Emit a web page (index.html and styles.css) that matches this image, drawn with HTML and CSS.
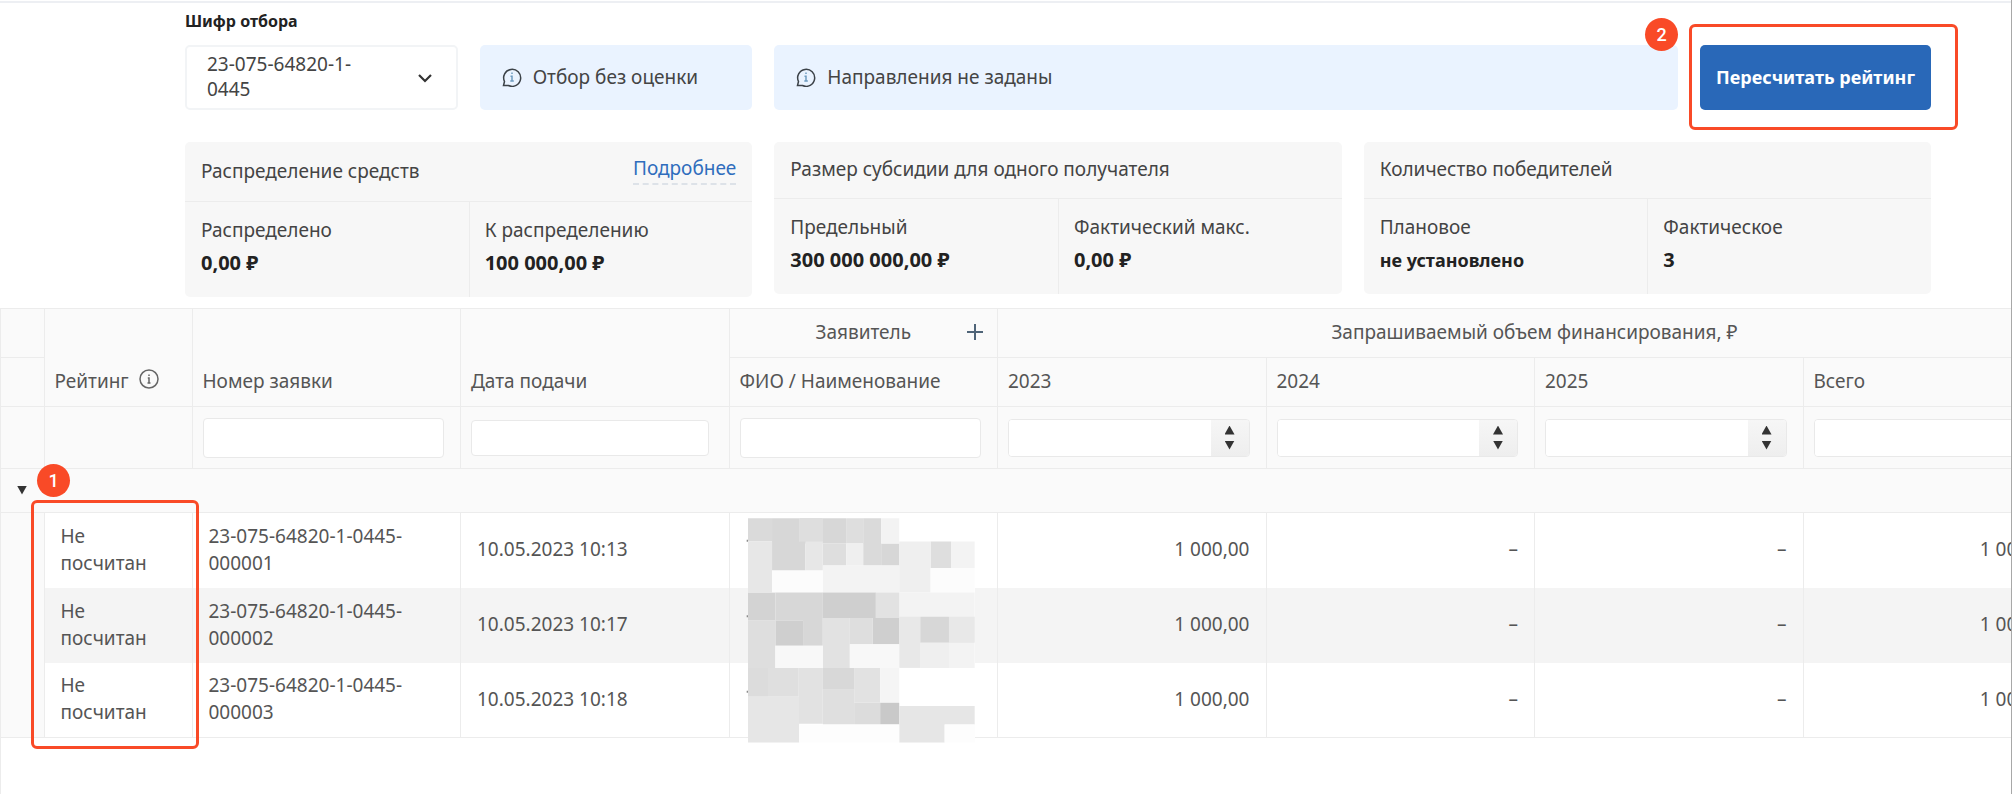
FILE: index.html
```html
<!DOCTYPE html>
<html lang="ru">
<head>
<meta charset="utf-8">
<title>Рейтинг заявок</title>
<link rel="stylesheet" href="styles.css">
</head>
<body>
<main class="page">
  <section class="summary">
    <label class="field-label" for="selection">Шифр отбора</label>
    <div class="toolbar">
      <div class="toolbar-start">
        <div class="select-box">
          <select id="selection" class="select"><option>23-075-64820-1-0445</option></select>
          <svg class="chevron" viewBox="0 0 16 10" aria-hidden="true"><path d="M2 2l6 6 6-6"/></svg>
        </div>
        <div class="notice">
          <svg class="notice-icon" viewBox="0 0 20 20" aria-hidden="true"><path d="M1.500 18.500l1-4A8.500 8.500 0 1 1 6.500 18.500z"/><path class="accent" d="M10 5.500v1.600M8.500 9.300H10v4.700M8.300 14h3.500"/></svg>
          <span>Отбор без оценки</span>
        </div>
      </div>
      <div class="notice">
        <svg class="notice-icon" viewBox="0 0 20 20" aria-hidden="true"><path d="M1.500 18.500l1-4A8.500 8.500 0 1 1 6.500 18.500z"/><path class="accent" d="M10 5.500v1.600M8.500 9.300H10v4.700M8.300 14h3.500"/></svg>
        <span>Направления не заданы</span>
      </div>
      <div class="action">
        <button class="primary" type="button">Пересчитать рейтинг</button>
        <div class="callout callout-action"></div>
        <span class="marker marker-action">2</span>
      </div>
    </div>

    <div class="cards">
      <article class="card">
        <header class="card-head"><span>Распределение средств</span><a class="more" href="#details">Подробнее</a></header>
        <dl class="card-body">
          <div class="metric"><dt>Распределено</dt><dd>0,00 ₽</dd></div>
          <div class="metric"><dt>К распределению</dt><dd>100 000,00 ₽</dd></div>
        </dl>
      </article>
      <article class="card">
        <header class="card-head"><span>Размер субсидии для одного получателя</span></header>
        <dl class="card-body">
          <div class="metric"><dt>Предельный</dt><dd>300 000 000,00 ₽</dd></div>
          <div class="metric"><dt>Фактический макс.</dt><dd>0,00 ₽</dd></div>
        </dl>
      </article>
      <article class="card">
        <header class="card-head"><span>Количество победителей</span></header>
        <dl class="card-body">
          <div class="metric"><dt>Плановое</dt><dd class="verbal">не установлено</dd></div>
          <div class="metric"><dt>Фактическое</dt><dd>3</dd></div>
        </dl>
      </article>
    </div>
  </section>

  <section class="grid">
    <table class="table">
      <colgroup>
        <col class="col-toggle"><col class="col-rating"><col class="col-data"><col class="col-data"><col class="col-data"><col class="col-data"><col class="col-data"><col class="col-data"><col class="col-data">
      </colgroup>
      <thead>
        <tr class="head-row">
          <th></th>
          <th rowspan="2" class="low"><span class="with-icon">Рейтинг
            <svg class="info" viewBox="0 0 20 20" aria-hidden="true"><circle cx="10" cy="10" r="9"/><path d="M10 5.500v1.500M8.800 9H10v5M8.500 14h3"/></svg></span></th>
          <th rowspan="2" class="low">Номер заявки</th>
          <th rowspan="2" class="low">Дата подачи</th>
          <th class="group"><span class="group-title">Заявитель<button class="expand" type="button" aria-label="Развернуть"><svg viewBox="0 0 16 16" aria-hidden="true"><path d="M8 0v16M0 8h16"/></svg></button></span></th>
          <th class="group" colspan="4">Запрашиваемый объем финансирования, ₽</th>
        </tr>
        <tr class="head-row">
          <th></th>
          <th>ФИО / Наименование</th><th>2023</th><th>2024</th><th>2025</th><th>Всего</th>
        </tr>
        <tr class="filter-row">
          <td></td>
          <td></td>
          <td><input class="filter" type="text" aria-label="Номер заявки"></td>
          <td><input class="filter filter-date" type="text" aria-label="Дата подачи"></td>
          <td><input class="filter" type="text" aria-label="ФИО / Наименование"></td>
          <td><div class="number"><input type="text" aria-label="2023"><span class="spin"><button class="up" type="button" aria-label="Больше"></button><button class="down" type="button" aria-label="Меньше"></button></span></div></td>
          <td><div class="number"><input type="text" aria-label="2024"><span class="spin"><button class="up" type="button" aria-label="Больше"></button><button class="down" type="button" aria-label="Меньше"></button></span></div></td>
          <td><div class="number"><input type="text" aria-label="2025"><span class="spin"><button class="up" type="button" aria-label="Больше"></button><button class="down" type="button" aria-label="Меньше"></button></span></div></td>
          <td><div class="number"><input type="text" aria-label="Всего"><span class="spin"><button class="up" type="button" aria-label="Больше"></button><button class="down" type="button" aria-label="Меньше"></button></span></div></td>
        </tr>
      </thead>
      <tbody>
        <tr class="group-row"><td colspan="9"><button class="collapse" type="button" aria-label="Свернуть группу"></button></td></tr>
        <tr class="row"><td class="gutter"></td><td>Не<br>посчитан</td><td>23-075-64820-1-0445-000001</td><td>10.05.2023 10:13</td><td></td><td class="num">1 000,00</td><td class="num">–</td><td class="num">–</td><td class="num">1 000,00</td></tr>
        <tr class="row"><td class="gutter"></td><td>Не<br>посчитан</td><td>23-075-64820-1-0445-000002</td><td>10.05.2023 10:17</td><td></td><td class="num">1 000,00</td><td class="num">–</td><td class="num">–</td><td class="num">1 000,00</td></tr>
        <tr class="row"><td class="gutter"></td><td>Не<br>посчитан</td><td>23-075-64820-1-0445-000003</td><td>10.05.2023 10:18</td><td></td><td class="num">1 000,00</td><td class="num">–</td><td class="num">–</td><td class="num">1 000,00</td></tr>
      </tbody>
    </table>
    <svg class="mosaic" viewBox="138 56 686 673" aria-hidden="true">
      <path fill="#fff" d="M144 56h680v673H144z"/>
      <path fill="#8c8c8c" d="M140 121h4v6h-4zM140 347h4v6h-4zM140 573h4v6h-4z"/>
      <path fill="#dadada" d="M144 56h72v70h-72zM298 56h70v76h-70zM489 56h54v142h-54z"/>
      <path fill="#d7d7d7" d="M216 56h82v70h18v87H216zM368 56h70v76h-70zM543 132h54v66h-54z"/>
      <path fill="#dedede" d="M438 56h51v76h-51zM298 56h70v70h-70zM368 132h70v66h-70zM691 126h62v79h-62z"/>
      <path fill="#f3f3f3" d="M543 56h54v76h-54zM753 126h70v79h-70zM368 198h229v81H368z"/>
      <path fill="#e7e7e7" d="M144 126h72v153h-72zM316 126h52v87h-52z"/>
      <path fill="#efefef" d="M438 132h51v66h-51zM597 126h94v153h-94z"/>
      <path fill="#fcfcfc" d="M216 213h152v66H216zM691 205h132v74H691z"/>
      <path fill="#f3f3f3" d="M597 279h226v226H597z"/>
      <path fill="#d3d3d3" d="M144 279h82v84h-82z"/>
      <path fill="#d7d7d7" d="M226 279h142v84H226zM309 363h59v75h-59zM660 351h86v78h-86z"/>
      <path fill="#cfcfcf" d="M368 279h159v76H368zM226 363h83v75h-83zM518 355h79v79h-79z"/>
      <path fill="#e2e2e2" d="M527 279h70v76h-70zM368 355h81v150h-81z"/>
      <path fill="#dedede" d="M144 363h82v142h-82zM449 355h69v79h-69z"/>
      <path fill="#e8e8e8" d="M597 351h63v153h-63zM746 351h77v78h-77z"/>
      <path fill="#efefef" d="M660 429h86v76h-86z"/>
      <path fill="#f8f8f8" d="M226 438h142v67H226zM449 434h148v71H449z"/>
      <path fill="#dcdcdc" d="M144 505h60v86h-60zM462 609h78v65h-78z"/>
      <path fill="#dfdfdf" d="M204 505h92v86h-92zM368 570h94v104h-94z"/>
      <path fill="#e2e2e2" d="M296 505h72v167h-72zM462 505h78v104h-78z"/>
      <path fill="#d8d8d8" d="M368 505h94v65h-94z"/>
      <path fill="#f5f5f5" d="M540 505h57v104h-57z"/>
      <path fill="#c9c9c9" d="M540 609h57v65h-57z"/>
      <path fill="#e6e6e6" d="M144 591h153v137H144zM597 619h136v109H597zM733 619h90v55h-90z"/>
      <path fill="#fdfdfd" d="M297 674h300v54H297zM733 674h90v54h-90z"/>
    </svg>
    <div class="callout callout-rating"></div>
    <span class="marker marker-rating">1</span>
  </section>
</main>
</body>
</html>
```
FILE: styles.css
```css
* { box-sizing: border-box; }

body {
  margin: 0;
  background: #fff;
  color: #444;
  font: 19px/24px "Noto Sans", "Open Sans", sans-serif;
}

button, input, select { font: inherit; color: inherit; margin: 0; padding: 0; }

.page {
  display: flex;
  flex-direction: column;
  min-height: 100vh;
  overflow: hidden;
  border-right: 1px solid #a8a8a8;
}

.page::before {
  content: "";
  height: 2px;
  margin-top: 1px;
  background: #edeff3;
}

/* Summary */
.summary { padding: 6px 80px 11px 185px; }

.field-label {
  display: block;
  color: #222;
  font-size: 16px;
  font-weight: 700;
}

.toolbar, .cards {
  display: grid;
  grid-template-columns: repeat(3, 1fr);
  column-gap: 22px;
}

.toolbar {
  grid-template-columns: calc((100% - 44px) / 3) 1fr 231px;
  margin-top: 12px;
}

.toolbar-start {
  display: grid;
  grid-template-columns: 1fr 1fr;
  column-gap: 22px;
}

.select-box { position: relative; display: grid; height: 65px; }

.select {
  appearance: none;
  width: 100%;
  min-width: 0;
  padding: 0 80px 2px 20px;
  border: 2px solid #f2f4f6;
  border-radius: 5px;
  background: #fff;
  line-height: 25px;
  white-space: normal;
}

.chevron {
  position: absolute;
  top: 28px;
  right: 25px;
  width: 16px;
  height: 10px;
  fill: none;
  stroke: #333;
  stroke-width: 2.2;
}

.notice {
  display: flex;
  align-items: center;
  gap: 11px;
  height: 65px;
  padding: 0 22px 2px;
  border-radius: 5px;
  background: #eaf3ff;
}

.notice-icon {
  flex: none;
  width: 20px;
  height: 20px;
  fill: none;
  stroke: #3c4248;
  stroke-width: 1.5;
}

.notice-icon .accent { stroke: #6f9cc0; }

.action { position: relative; }

.primary {
  width: 100%;
  height: 65px;
  padding-bottom: 2px;
  border: 0;
  border-radius: 5px;
  background: #2968b8;
  color: #fff;
  font-size: 18px;
  font-weight: 700;
  white-space: nowrap;
}

.cards { align-items: start; margin-top: 32px; }

.card { overflow: hidden; border-radius: 5px; background: #f7f7f7; }

.card-head {
  display: flex;
  align-items: center;
  justify-content: space-between;
  min-height: 57px;
  padding: 14px 16px 16px;
  border-bottom: 1px solid #ececec;
}

.more {
  padding-bottom: 3px;
  border-bottom: 2px dashed #dde2e8;
  color: #2f6dbd;
  text-decoration: none;
}

.card-body { display: grid; grid-template-columns: 1fr 1fr; margin: 0; }
.metric { padding: 14px 16px 20px; }
.metric + .metric { padding-left: 15px; border-left: 1px solid #ececec; }
.metric dt { line-height: 28px; }
.metric dd { margin: 5px 0 0; color: #222; font-size: 20px; font-weight: 700; line-height: 28px; }
.metric .verbal { font-size: 18px; }

/* Applications table */
.grid {
  position: relative;
  flex: 1;
  overflow: hidden;
  border-left: 1px solid #ececec;
}

.table {
  width: 2071px;
  border-collapse: collapse;
  table-layout: fixed;
  color: #555;
}

.col-toggle { width: 43px; }
.col-rating { width: 148px; }

.table th, .table td { border: 1px solid #ececec; padding: 0 16px 1px; text-align: left; }
.table tr > :first-child { border-left: 0; }
.table th { padding: 0 10px 2px; background: #fafafa; font-weight: 400; }
.head-row { height: 49px; }
.table .low { vertical-align: bottom; padding-bottom: 13px; }
.table .group { text-align: center; }

.with-icon { display: flex; align-items: flex-start; gap: 10px; white-space: nowrap; }
.info { width: 20px; height: 20px; fill: none; stroke: #666; stroke-width: 1.5; }

.group-title { display: grid; grid-template-columns: 1fr auto 1fr; align-items: center; }
.group-title::before { content: ""; }
.expand { justify-self: end; width: 16px; height: 24px; margin-right: 4px; border: 0; background: none; }
.expand svg { display: block; width: 16px; height: 16px; stroke: #4f6478; stroke-width: 2; }

.filter-row { height: 62px; }
.table .filter-row td { padding: 0 16px 0 10px; background: #fafafa; }

.filter {
  display: block;
  width: 100%;
  height: 40px;
  padding: 0 8px;
  border: 1px solid #e9e9e9;
  border-radius: 4px;
  background: #fff;
}

.filter-date { width: calc(100% - 4px); height: 36px; }

.number {
  display: flex;
  height: 38px;
  overflow: hidden;
  border: 1px solid #e9e9e9;
  border-radius: 4px;
  background: #fff;
}

.number input { flex: 1; min-width: 0; padding: 0 8px; border: 0; }

.spin {
  display: flex;
  flex-direction: column;
  align-items: center;
  justify-content: center;
  gap: 6px;
  width: 38px;
  background: linear-gradient(#f6f6f6, #eeeeee);
}

.up, .down, .collapse {
  width: 10px;
  height: 9px;
  border: 0;
  background: #333;
}

.up { clip-path: polygon(50% 0, 100% 100%, 0 100%); }
.down, .collapse { clip-path: polygon(0 0, 100% 0, 50% 100%); }
.collapse { display: block; }

.group-row { height: 44px; }
.table .group-row td { background: #fafafa; }

.row { height: 75px; line-height: 27px; background: #fff; }
.row:nth-child(odd) { background: #f4f4f4; }
.table .row td { border-top: 0; border-bottom: 0; }
.table .row:last-child td { border-bottom: 1px solid #ececec; }
.row .gutter { background: #fafafa; }
.table .num { text-align: right; }

.mosaic { position: absolute; top: 210px; left: 745px; width: 229px; height: 225px; }

/* Guide marks */
.callout {
  position: absolute;
  border: 3px solid #f94a27;
  border-radius: 6px;
  pointer-events: none;
}

.marker {
  position: absolute;
  display: grid;
  place-items: center;
  width: 33px;
  height: 33px;
  border-radius: 50%;
  background: #f94a27;
  color: #fff;
  font: 500 18px/1 Roboto, sans-serif;
}

.callout-action { inset: -21px -27px -20px -11px; }
.marker-action { top: -27px; left: -55px; }
.callout-rating { top: 192px; left: 30px; width: 168px; height: 249px; }
.marker-rating { top: 156px; left: 36px; }
```
